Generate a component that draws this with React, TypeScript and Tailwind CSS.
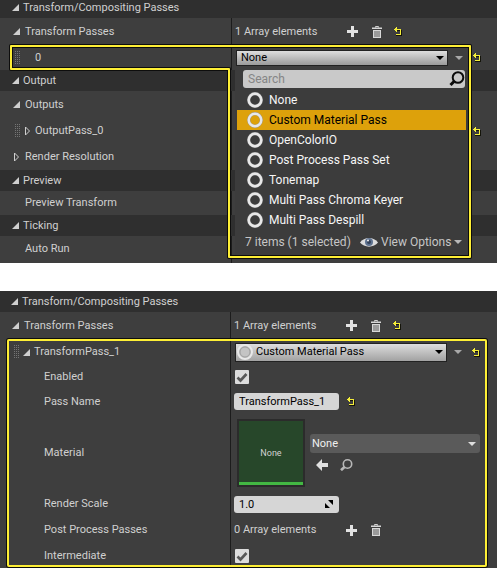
import type { ReactNode } from "react";

const passTypes = [
  "None",
  "Custom Material Pass",
  "OpenColorIO",
  "Post Process Pass Set",
  "Tonemap",
  "Multi Pass Chroma Keyer",
  "Multi Pass Despill",
];

function OpenTriangle() {
  return (
    <svg width="7" height="7" viewBox="0 0 7 7" aria-hidden="true">
      <path d="M7 0V7H0Z" fill="#cfcfcf" />
    </svg>
  );
}

function ClosedTriangle() {
  return (
    <svg width="7" height="10" viewBox="0 0 7 10" aria-hidden="true">
      <path d="M1.5 1L5.5 5L1.5 9Z" fill="none" stroke="#cfcfcf" />
    </svg>
  );
}

function Expander({ open, name }: { open: boolean; name: string }) {
  return (
    <button type="button" aria-label={name} aria-expanded={open} className="flex w-[7px] shrink-0 justify-center">
      {open ? <OpenTriangle /> : <ClosedTriangle />}
    </button>
  );
}

function Grip() {
  const rows = [0, 2, 4, 6, 8, 10, 12];
  return (
    <svg width="5" height="14" viewBox="0 0 5 14" className="shrink-0" shapeRendering="crispEdges" aria-hidden="true">
      {rows.map((y) => (
        <g key={y} fill="#757575">
          <rect x="0" y={y} width="1" height="1" />
          <rect x="2" y={y} width="1" height="1" />
          <rect x="4" y={y} width="1" height="1" />
        </g>
      ))}
    </svg>
  );
}

function ResetButton() {
  return (
    <button type="button" aria-label="Reset to default" className="shrink-0">
      <svg width="8" height="9" viewBox="0 0 8 9" shapeRendering="crispEdges" aria-hidden="true">
        <path d="M3 3.5H7.5V8.5H2" fill="none" stroke="#14140a" />
        <path d="M1 2.5H6.5V7.5H2" fill="none" stroke="#f4ed3a" />
        <path d="M0 2H1V1H2V0H3V2H2V3H3V5H2V4H1V3H0Z" fill="#f4ed3a" />
      </svg>
    </button>
  );
}

function PlusButton() {
  return (
    <button type="button" aria-label="Add element" className="shrink-0">
      <svg width="11" height="11" viewBox="0 0 11 11" aria-hidden="true">
        <path d="M4 0H7V4H11V7H7V11H4V7H0V4H4Z" fill="#e2e2e2" />
      </svg>
    </button>
  );
}

function TrashButton() {
  return (
    <button type="button" aria-label="Remove all elements" className="shrink-0">
      <svg width="10" height="12" viewBox="0 0 10 12" aria-hidden="true">
        <path d="M3.5 1.5V0.5H6.5V1.5" fill="none" stroke="#d0d0d0" />
        <path d="M0 1.5H10V3H0Z" fill="#d8d8d8" />
        <path d="M1 4H9V12H1Z" fill="#d8d8d8" />
        <path d="M3 5V11M5 5V11M7 5V11" stroke="#505050" strokeWidth="0.9" />
      </svg>
    </button>
  );
}

function DownArrow({ color }: { color: string }) {
  return (
    <svg width="8" height="4" viewBox="0 0 8 4" className="shrink-0" aria-hidden="true">
      <path d="M0 0H8L4 4Z" fill={color} />
    </svg>
  );
}

function Ring() {
  return (
    <svg width="16" height="16" viewBox="0 0 16 16" className="shrink-0" aria-hidden="true">
      <circle cx="8" cy="8" r="6.3" fill="none" stroke="#9d9d9d" strokeWidth="3.2" />
      <circle cx="8" cy="8" r="6.3" fill="none" stroke="#e8e8e8" strokeWidth="2.4" />
    </svg>
  );
}

function Category({ name, className }: { name: string; className: string }) {
  return (
    <h2 className={`flex items-center gap-1 bg-[#2f2f2f] ${className}`}>
      <Expander open name={name} />
      {name}
    </h2>
  );
}

function Row({
  columns,
  height,
  label,
  children,
}: {
  columns: string;
  height: string;
  label: ReactNode;
  children?: ReactNode;
}) {
  return (
    <div className={`grid ${columns} ${height}`}>
      <div className="flex items-center border-r border-[#1c1c1c]">{label}</div>
      <div className="relative flex items-center">{children}</div>
    </div>
  );
}

function ArrayControls({ text, reset }: { text: string; reset?: boolean }) {
  return (
    <div className="flex items-center pl-[3px]">
      <span className="w-28">{text}</span>
      <div className="flex items-center gap-3">
        <PlusButton />
        <span className="ml-[2px] flex">
          <TrashButton />
        </span>
        {reset && <ResetButton />}
      </div>
    </div>
  );
}

function PassMenu() {
  return (
    <div className="absolute top-[25px] left-[3px] z-10 flex w-[234px] flex-col bg-[#3c3c3c] pb-1 text-[12px] text-[#f6f6f6]">
      <div className="relative mr-1 ml-2">
        <input
          type="search"
          aria-label="Search"
          placeholder="Search"
          className="block h-[18px] w-full rounded-[3px] bg-[#c9c9c9] px-[5px] text-black outline-none placeholder:text-[#858585]"
        />
        <svg width="16" height="16" viewBox="0 0 16 16" className="absolute top-px right-0" aria-hidden="true">
          <circle cx="9" cy="6.5" r="5.3" fill="none" stroke="#0c0c0c" strokeWidth="2" />
          <path d="M5.5 10L1.5 14" stroke="#0c0c0c" strokeWidth="3" />
        </svg>
      </div>
      <ul role="listbox" aria-label="Pass type" className="mt-[2px] mr-[3px] ml-[2px]">
        {passTypes.map((name) => {
          const active = name === "Custom Material Pass";
          return (
            <li key={name} role="option" aria-selected={active}>
              <button
                type="button"
                className={`flex h-5 w-full items-center gap-[6px] pl-[10px] ${active ? "bg-[#dda10b] text-black" : ""}`}
              >
                <Ring />
                {name}
              </button>
            </li>
          );
        })}
      </ul>
      <div className="flex h-6 items-center pl-[10px] text-[#c6c6c6]">
        <span className="w-[115px] whitespace-nowrap">7 items (1 selected)</span>
        <button type="button" className="flex items-center gap-[3px] whitespace-nowrap">
          <svg width="18" height="12" viewBox="0 0 18 12" aria-hidden="true">
            <path d="M0 6.5C4 0.5 14 0.5 18 6.5C14 12 4 12 0 6.5Z" fill="#dcdcdc" />
            <circle cx="9" cy="6" r="4" fill="#5f7390" />
            <circle cx="9" cy="6" r="2" fill="#33425a" />
            <circle cx="8" cy="4.5" r="1" fill="#f0f0f0" />
          </svg>
          View Options
          <DownArrow color="#b8b8b8" />
        </button>
      </div>
      <span className="absolute top-20 right-0 h-[14px] w-px bg-[#e6e6e6]" />
    </div>
  );
}

function DropdownPanel() {
  const columns = "grid-cols-[232px_1fr]";
  return (
    <section className="relative bg-[#3e3e3e]">
      <Category name="Transform/Compositing Passes" className="h-[18px] pb-[3px] pl-3" />
      <Row
        columns={columns}
        height="h-[27px]"
        label={
          <span className="flex items-center gap-[5px] pl-[13px]">
            <Expander open name="Transform Passes" />
            Transform Passes
          </span>
        }
      >
        <ArrayControls text="1 Array elements" reset />
      </Row>
      <Row
        columns={columns}
        height="h-[25px]"
        label={
          <span className="flex items-center gap-[15px] pl-[15px]">
            <Grip />
            <span>0</span>
          </span>
        }
      >
        <button
          type="button"
          aria-haspopup="listbox"
          aria-expanded="true"
          className="ml-1 flex h-4 w-[212px] items-center justify-between border border-[#222] bg-linear-to-b from-[#dedede] to-[#9b9b9b] pr-[3px] pl-1 text-black"
        >
          None
          <DownArrow color="#000" />
        </button>
        <button type="button" aria-label="Use options" className="ml-[7px]">
          <DownArrow color="#a8a8a8" />
        </button>
        <span className="ml-[10px] flex">
          <ResetButton />
        </span>
        <PassMenu />
      </Row>
      <Category name="Output" className="h-[21px] pl-3" />
      <Row
        columns={columns}
        height="h-[27px]"
        label={
          <span className="flex items-center gap-[5px] pl-[13px]">
            <Expander open name="Outputs" />
            Outputs
          </span>
        }
      />
      <Row
        columns={columns}
        height="h-[26px]"
        label={
          <span className="flex items-center gap-1 pl-[15px]">
            <Grip />
            <Expander open={false} name="OutputPass_0" />
            <span>OutputPass_0</span>
          </span>
        }
      >
        <span className="ml-[241px] flex">
          <ResetButton />
        </span>
      </Row>
      <Row
        columns={columns}
        height="h-[26px]"
        label={
          <span className="flex items-center gap-[5px] pl-[13px]">
            <Expander open={false} name="Render Resolution" />
            Render Resolution
          </span>
        }
      />
      <Category name="Preview" className="h-[21px] pl-3" />
      <Row columns={columns} height="h-[24px]" label={<span className="pl-[25px]">Preview Transform</span>} />
      <Category name="Ticking" className="h-[21px] pl-3" />
      <Row columns={columns} height="h-[27px]" label={<span className="pb-[2px] pl-[25px]">Auto Run</span>} />
      <svg
        width="480"
        height="263"
        viewBox="0 0 480 263"
        className="pointer-events-none absolute top-0 left-0 z-20"
        fill="none"
        strokeLinejoin="round"
        aria-hidden="true"
      >
        <path d="M11 46H470V257H229V69H11Z" stroke="#0d0d0d" strokeWidth="4" />
        <path d="M11 46H470V257H229V69H11Z" stroke="#fdee35" strokeWidth="2" />
      </svg>
    </section>
  );
}

function CheckBox({ id }: { id: string }) {
  return (
    <span className="relative ml-1 flex">
      <input id={id} type="checkbox" defaultChecked className="h-[14px] w-[14px] appearance-none rounded-[1px] bg-[#dcdcdc]" />
      <svg width="14" height="14" viewBox="0 0 14 14" className="pointer-events-none absolute top-0 left-0" aria-hidden="true">
        <path d="M2.5 7.5L5.5 10.5L11.5 4" fill="none" stroke="#585858" strokeWidth="2.6" />
      </svg>
    </span>
  );
}

function PassPanel() {
  const columns = "grid-cols-[231px_1fr]";
  const field = "h-[17px] w-[105px] rounded-[3px] bg-[#d6d6d6] px-[5px] text-black outline-none";
  return (
    <section className="relative bg-[#3e3e3e]">
      <Category name="Transform/Compositing Passes" className="h-[21px] pl-[11px]" />
      <Row
        columns={columns}
        height="h-[27px]"
        label={
          <span className="flex items-center gap-[5px] pl-3">
            <Expander open name="Transform Passes" />
            Transform Passes
          </span>
        }
      >
        <ArrayControls text="1 Array elements" reset />
      </Row>
      <Row
        columns={columns}
        height="h-[26px]"
        label={
          <span className="flex items-center gap-1 pl-[14px]">
            <Grip />
            <Expander open name="TransformPass_1" />
            <label htmlFor="pass-class">TransformPass_1</label>
          </span>
        }
      >
        <span className="relative ml-1 flex items-center">
          <select
            id="pass-class"
            defaultValue="Custom Material Pass"
            className="h-[19px] w-[212px] appearance-none border border-[#222] bg-linear-to-b from-[#dedede] to-[#a2a2a2] pl-5 text-black outline-none"
          >
            {passTypes.map((name) => (
              <option key={name}>{name}</option>
            ))}
          </select>
          <svg width="16" height="16" viewBox="0 0 16 16" className="pointer-events-none absolute left-[2px]" aria-hidden="true">
            <circle cx="8" cy="8" r="7" fill="#bdbdbd" stroke="#e8e8e8" strokeWidth="2" />
            <circle cx="8" cy="8" r="5" fill="#c4c4c4" stroke="#a0a0a0" />
          </svg>
          <span className="pointer-events-none absolute right-1">
            <DownArrow color="#000" />
          </span>
        </span>
        <button type="button" aria-label="Use options" className="ml-[7px]">
          <DownArrow color="#a8a8a8" />
        </button>
        <span className="ml-[10px] flex">
          <ResetButton />
        </span>
      </Row>
      <Row columns={columns} height="h-[24px]" label={<label htmlFor="enabled" className="pl-11">Enabled</label>}>
        <CheckBox id="enabled" />
      </Row>
      <Row columns={columns} height="h-[25px]" label={<label htmlFor="pass-name" className="pl-11">Pass Name</label>}>
        <input id="pass-name" type="text" defaultValue="TransformPass_1" className={`ml-[3px] ${field}`} />
        <span className="ml-2 flex">
          <ResetButton />
        </span>
      </Row>
      <Row columns={columns} height="h-[77px]" label={<label htmlFor="material" className="pl-11">Material</label>}>
        <div className="ml-[6px] flex h-[68px] w-[68px] shrink-0 items-center justify-center border-2 border-[#2b2b2b] bg-[#27472a]">
          <div className="flex h-full w-full items-center justify-center border-b-[3px] border-[#43b843] pt-[3px] text-[9px] text-[#d2d2d2]">
            None
          </div>
        </div>
        <div className="ml-[5px] flex flex-col gap-[6px]">
          <span className="relative flex items-center">
            <select
              id="material"
              defaultValue="None"
              className="h-[19px] w-[170px] appearance-none rounded-[3px] bg-[#5a5a5a] pl-[2px] text-[#f0f0f0] outline-none"
            >
              <option>None</option>
            </select>
            <span className="pointer-events-none absolute right-1">
              <DownArrow color="#dedede" />
            </span>
          </span>
          <div className="flex gap-3 pl-[6px]">
            <button type="button" aria-label="Use selected asset">
              <svg width="12" height="12" viewBox="0 0 12 12" aria-hidden="true">
                <path d="M0 6L6 0V4H12V8H6V12Z" fill="#e0e0e0" />
              </svg>
            </button>
            <button type="button" aria-label="Browse to asset">
              <svg width="13" height="12" viewBox="0 0 13 12" aria-hidden="true">
                <circle cx="7.5" cy="5" r="4.2" fill="none" stroke="#b8b8b8" strokeWidth="1.6" />
                <path d="M4.5 8L1 11.2" stroke="#b8b8b8" strokeWidth="2.6" />
              </svg>
            </button>
          </div>
        </div>
      </Row>
      <Row columns={columns} height="h-[26px]" label={<label htmlFor="render-scale" className="pl-11">Render Scale</label>}>
        <span className="relative ml-[3px] flex items-center">
          <input id="render-scale" type="text" defaultValue="1.0" className={field} />
          <svg width="8" height="8" viewBox="0 0 8 8" className="pointer-events-none absolute right-[6px]" aria-hidden="true">
            <path d="M3 0H8V5ZM0 3L5 8H0Z" fill="#000" />
          </svg>
        </span>
      </Row>
      <Row columns={columns} height="h-[26px]" label={<span className="pl-11">Post Process Passes</span>}>
        <ArrayControls text="0 Array elements" />
      </Row>
      <Row columns={columns} height="h-[25px]" label={<label htmlFor="intermediate" className="pl-11">Intermediate</label>}>
        <CheckBox id="intermediate" />
      </Row>
      <div className="pointer-events-none absolute top-[48px] right-[10px] bottom-px left-[7px] rounded-[2px] border-2 border-[#fdee35] shadow-[0_0_0_1px_#0d0d0d]" />
    </section>
  );
}

export default function App() {
  return (
    <main className="flex flex-col gap-7 overflow-hidden bg-white font-['Roboto','Noto_Sans',sans-serif] text-[11px] leading-4 text-[#d0d0d0]">
      <DropdownPanel />
      <PassPanel />
    </main>
  );
}
